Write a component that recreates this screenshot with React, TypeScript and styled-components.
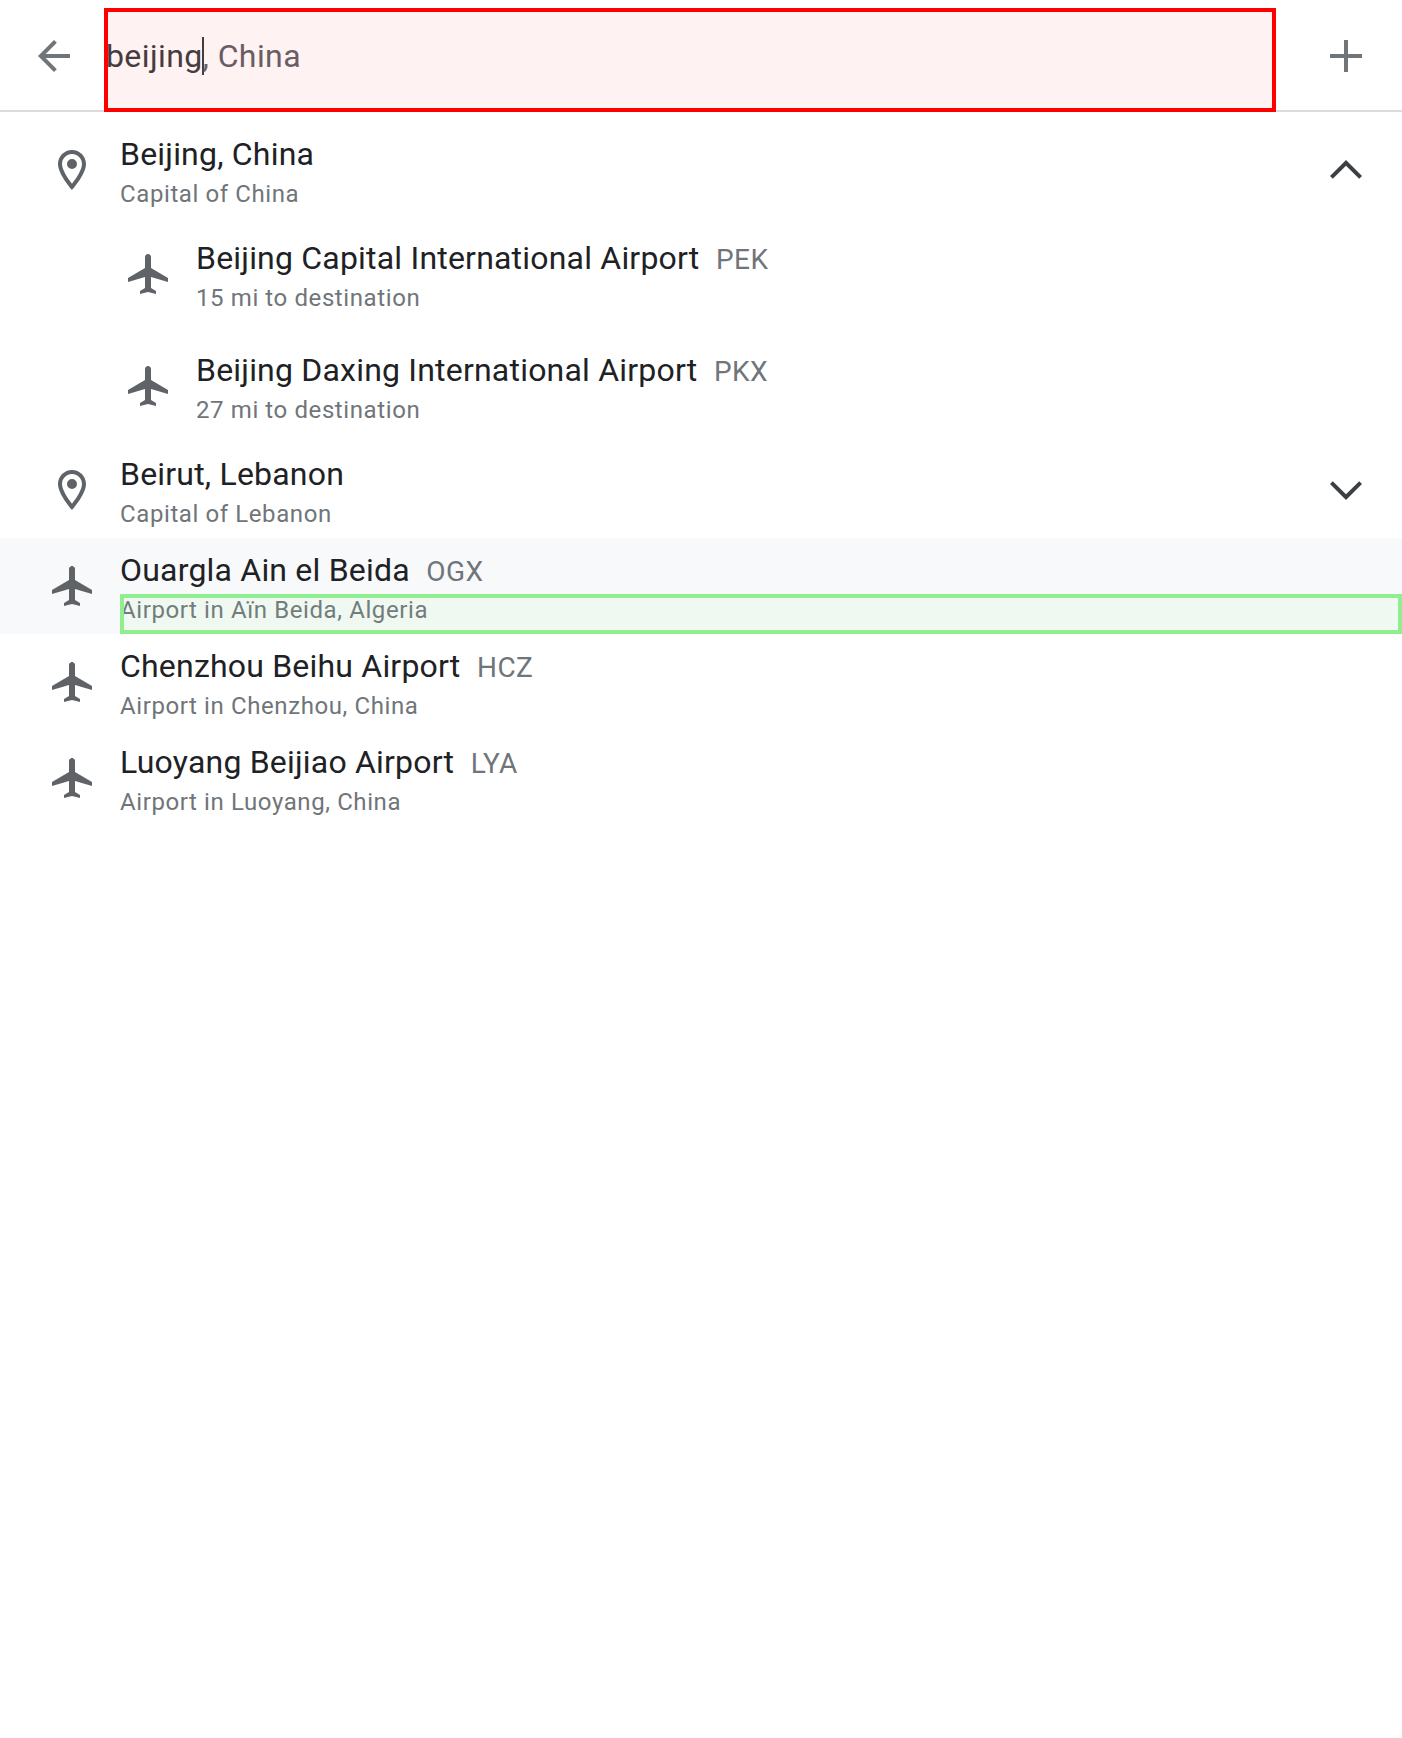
import React from "react";
import styled, { createGlobalStyle } from "styled-components";

const Global = createGlobalStyle`
  * { box-sizing: border-box; }
  body { margin: 0; background: #fff; font-family: Roboto, "Liberation Sans", sans-serif; }
`;

const Page = styled.main`
  min-height: 1738px;
  background: #fff;
  overflow: hidden;
`;

const Header = styled.header`
  display: flex;
  align-items: flex-start;
  height: 112px;
  padding: 8px 32px 0 30px;
  border-bottom: 2px solid #dadce0;
`;

const IconButton = styled.button`
  display: flex;
  flex: none;
  margin: 24px 0 0;
  padding: 0;
  border: 0;
  background: none;
  color: #70757a;
`;

const Field = styled.div`
  position: relative;
  display: flex;
  flex: 1;
  height: 104px;
  margin: 0 46px 0 26px;
  padding: 24px 0 0 2px;
  font-size: 32px;
  line-height: 48px;
  letter-spacing: 0.4px;
  white-space: pre;
`;

const Typed = styled.span`
  color: #3c4043;
`;

const Caret = styled.span`
  width: 2px;
  height: 38px;
  margin: 5px -1px 0 -1px;
  background: #3c4043;
`;

const Completion = styled.span`
  color: #5f6368;
`;

const Outline = styled.span<{ $line: string; $fill: string }>`
  position: absolute;
  inset: 0;
  border: 4px solid ${(p) => p.$line};
  background: ${(p) => p.$fill};
  pointer-events: none;
`;

const List = styled.ul`
  margin: 0;
  padding: 10px 0 0;
  list-style: none;
`;

const Row = styled.li<{ $nested?: boolean; $active?: boolean }>`
  display: flex;
  align-items: center;
  height: ${(p) => (p.$nested ? 112 : 96)}px;
  padding-left: ${(p) => (p.$nested ? 124 : 48)}px;
  background: ${(p) => (p.$active ? "#f8f9fa" : "transparent")};
  color: #5f6368;
`;

const Texts = styled.div`
  flex: 1;
  height: 96px;
  margin-left: 24px;
  padding-top: 8px;
`;

const Title = styled.div`
  display: flex;
  height: 48px;
  color: #202124;
  font-size: 32px;
  line-height: 48px;
  letter-spacing: 0.2px;
  white-space: nowrap;
`;

const Code = styled.span`
  margin-left: 16.5px;
  color: #70757a;
  font-size: 28px;
  line-height: 52px;
  letter-spacing: 0.4px;
`;

const Subtitle = styled.div`
  position: relative;
  height: 40px;
  color: #70757a;
  font-size: 24px;
  line-height: 32px;
  letter-spacing: 0.6px;
  white-space: nowrap;
`;

const Toggle = styled(IconButton)`
  margin: 0 32px 0 0;
  color: #3c4043;
`;

const paths = {
  back: "M20 11H7.83l5.59-5.59L12 4l-8 8 8 8 1.41-1.41L7.83 13H20v-2z",
  add: "M20 13h-7v7h-2v-7H4v-2h7V4h2v7h7v2z",
  up: "M18.59 16.41L20 15l-8-8-8 8 1.41 1.41L12 9.83z",
  down: "M5.41 7.59L4 9l8 8 8-8-1.41-1.41L12 14.17z",
  plane:
    "M22 16v-2l-8.5-5V3.5c0-.83-.67-1.5-1.5-1.5s-1.5.67-1.5 1.5V9L2 14v2l8.5-2.5V19L8 20.5V22l4-1 4 1v-1.5L13.5 19v-5.5L22 16z",
  pin: "M12 2C8.13 2 5 5.13 5 9c0 5.25 7 13 7 13s7-7.75 7-13c0-3.87-3.13-7-7-7zM7 9c0-2.76 2.24-5 5-5s5 2.24 5 5c0 2.88-2.88 7.19-5 9.88C9.92 16.21 7 11.85 7 9zM12 6.5a2.5 2.5 0 1 0 0 5 2.5 2.5 0 0 0 0-5z",
};

type IconName = keyof typeof paths;

const Glyph = styled.svg`
  display: block;
  flex: none;
  width: 48px;
  height: 48px;
  fill: currentColor;
`;

const Icon = ({ name }: { name: IconName }) => (
  <Glyph viewBox="0 0 24 24" aria-hidden="true">
    <path d={paths[name]} />
  </Glyph>
);

interface Place {
  icon: IconName;
  title: string;
  code?: string;
  detail: string;
  nested?: boolean;
  active?: boolean;
  toggle?: "up" | "down";
}

const places: Place[] = [
  { icon: "pin", title: "Beijing, China", detail: "Capital of China", toggle: "up" },
  { icon: "plane", title: "Beijing Capital International Airport", code: "PEK", detail: "15 mi to destination", nested: true },
  { icon: "plane", title: "Beijing Daxing International Airport", code: "PKX", detail: "27 mi to destination", nested: true },
  { icon: "pin", title: "Beirut, Lebanon", detail: "Capital of Lebanon", toggle: "down" },
  { icon: "plane", title: "Ouargla Ain el Beida", code: "OGX", detail: "Airport in Aïn Beida, Algeria", active: true },
  { icon: "plane", title: "Chenzhou Beihu Airport", code: "HCZ", detail: "Airport in Chenzhou, China" },
  { icon: "plane", title: "Luoyang Beijiao Airport", code: "LYA", detail: "Airport in Luoyang, China" },
];

export default function App() {
  return (
    <Page>
      <Global />
      <Header>
        <IconButton aria-label="Back">
          <Icon name="back" />
        </IconButton>
        <Field>
          <Typed>beijing</Typed>
          <Caret />
          <Completion>, China</Completion>
          <Outline $line="#ff0000" $fill="rgba(255, 0, 0, 0.05)" />
        </Field>
        <IconButton aria-label="Add">
          <Icon name="add" />
        </IconButton>
      </Header>
      <List>
        {places.map((p) => (
          <Row key={p.title} $nested={p.nested} $active={p.active}>
            <Icon name={p.icon} />
            <Texts>
              <Title>
                {p.title}
                {p.code && <Code>{p.code}</Code>}
              </Title>
              <Subtitle>
                {p.detail}
                {p.active && <Outline $line="#90ee90" $fill="rgba(144, 238, 144, 0.07)" />}
              </Subtitle>
            </Texts>
            {p.toggle && (
              <Toggle aria-label="Toggle airports">
                <Icon name={p.toggle} />
              </Toggle>
            )}
          </Row>
        ))}
      </List>
    </Page>
  );
}
